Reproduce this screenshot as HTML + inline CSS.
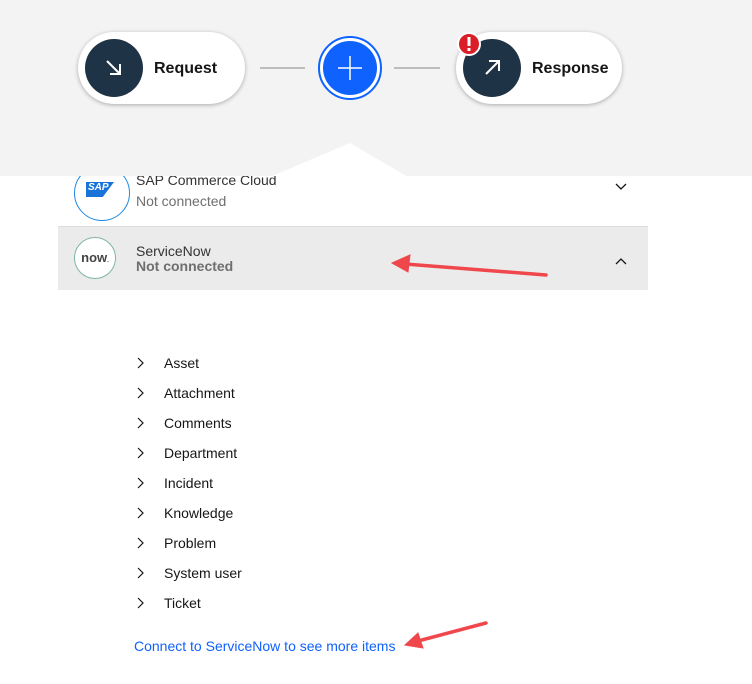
<!DOCTYPE html>
<html><head><style>
*{margin:0;padding:0;box-sizing:border-box}
body{width:752px;height:684px;background:#fff;font-family:"Liberation Sans",sans-serif;position:relative;overflow:hidden}
.top{position:absolute;left:0;top:0;width:752px;height:176px;background:#f3f3f3}
.pill{position:absolute;top:32px;height:72px;background:#fff;border-radius:36px;box-shadow:0 1px 4px rgba(0,0,0,.3)}
.dc{position:absolute;top:7px;left:7px;width:58px;height:58px;border-radius:50%;background:#1f3347}
.pl{position:absolute;top:27px;font-weight:bold;font-size:16px;color:#161616}
.t{position:absolute;font-size:14px;color:#161616}
.g{color:#6f6f6f}
.item{position:absolute;left:164px;font-size:14px;color:#161616}
</style></head><body>
<div class="top"></div>
<svg style="position:absolute;left:0;top:0" width="752" height="684">
<polygon points="270,177 350,143 408,177" fill="#fff"/>
<line x1="260" y1="68" x2="305" y2="68" stroke="#bdbdbd" stroke-width="2"/>
<line x1="394" y1="68" x2="440" y2="68" stroke="#bdbdbd" stroke-width="2"/>
<circle cx="350" cy="68" r="31" fill="#fff" stroke="#0f62fe" stroke-width="2"/>
<circle cx="350" cy="68" r="27" fill="#0f62fe"/>
<path d="M350 56V80M338 68H362" stroke="#fff" stroke-width="1.5"/>
</svg>
<div class="pill" style="left:78px;width:167px"><div class="dc"><svg width="58" height="58"><path d="M22 22L35 35M35 25V35H25" stroke="#fff" stroke-width="2" fill="none"/></svg></div><div class="pl" style="left:76px;top:28px">Request</div></div>
<div class="pill" style="left:456px;width:166px"><div class="dc"><svg width="58" height="58"><path d="M23 35L36 22M26 22H36V32" stroke="#fff" stroke-width="2" fill="none"/></svg></div><div class="pl" style="left:76px;top:28px">Response</div></div>
<svg style="position:absolute;left:456px;top:31px" width="28" height="28"><circle cx="13" cy="13" r="11" fill="#da1e28" stroke="#fff" stroke-width="2"/><rect x="11.5" y="6" width="3" height="9" fill="#fff"/><rect x="11.5" y="17" width="3" height="3" fill="#fff"/></svg>
<div style="position:absolute;left:0;top:176px;width:752px;height:50px;overflow:hidden">
<div style="position:absolute;left:74px;top:-11px;width:56px;height:56px;border:1px solid #1e88e5;border-radius:50%;background:#fff"></div>
<div style="position:absolute;left:86px;top:6px;width:28px;height:15px;background:#1a73d9;color:#fff;font-size:10px;font-weight:bold;font-style:italic;padding-left:2px;clip-path:polygon(0 0,100% 0,60% 100%,0 100%)">SAP</div>
<div class="t" style="left:136px;top:-4px;color:#333">SAP Commerce Cloud</div>
<div class="t g" style="left:136px;top:17px">Not connected</div>
<svg style="position:absolute;left:614px;top:6px" width="14" height="10"><path d="M2 2L7 7L12 2" stroke="#161616" fill="none" stroke-width="1.3"/></svg>
</div>
<div style="position:absolute;left:58px;top:226px;width:590px;height:64px;background:#ebebeb;border-top:1px solid #ddd">
<div style="position:absolute;left:16px;top:10px;width:42px;height:42px;border:1px solid #7fb5a3;border-radius:50%;background:#fff;font-size:13px;font-weight:bold;color:#444;text-align:center;line-height:40px">now<span style="font-size:6px">.</span></div>
<div class="t" style="left:78px;top:16px;color:#333">ServiceNow</div>
<div class="t g" style="left:78px;top:31px;font-weight:bold">Not connected</div>
<svg style="position:absolute;left:556px;top:30px" width="14" height="10"><path d="M2 7L7 2L12 7" stroke="#161616" fill="none" stroke-width="1.3"/></svg>
</div>
<svg style="position:absolute;left:0;top:0" width="752" height="684">
<g fill="none" stroke="#161616" stroke-width="1.2">
<path d="M138 358L143 363L138 368"/><path d="M138 388L143 393L138 398"/><path d="M138 418L143 423L138 428"/><path d="M138 448L143 453L138 458"/><path d="M138 478L143 483L138 488"/><path d="M138 508L143 513L138 518"/><path d="M138 538L143 543L138 548"/><path d="M138 568L143 573L138 578"/><path d="M138 598L143 603L138 608"/>
</g>
<g stroke="#f0474d" stroke-width="3.5" fill="#f0474d" stroke-linecap="round">
<line x1="546" y1="275" x2="405" y2="264"/><polygon points="392,263 410,255 408,272" stroke-width="1"/>
<line x1="486" y1="623" x2="418" y2="641"/><polygon points="405,645 418,633 423,648" stroke-width="1"/>
</g>
</svg>
<div class="item" style="top:355px">Asset</div>
<div class="item" style="top:385px">Attachment</div>
<div class="item" style="top:415px">Comments</div>
<div class="item" style="top:445px">Department</div>
<div class="item" style="top:475px">Incident</div>
<div class="item" style="top:505px">Knowledge</div>
<div class="item" style="top:535px">Problem</div>
<div class="item" style="top:565px">System user</div>
<div class="item" style="top:595px">Ticket</div>
<div style="position:absolute;left:134px;top:638px;font-size:14px;color:#0f62fe">Connect to ServiceNow to see more items</div>
</body></html>
